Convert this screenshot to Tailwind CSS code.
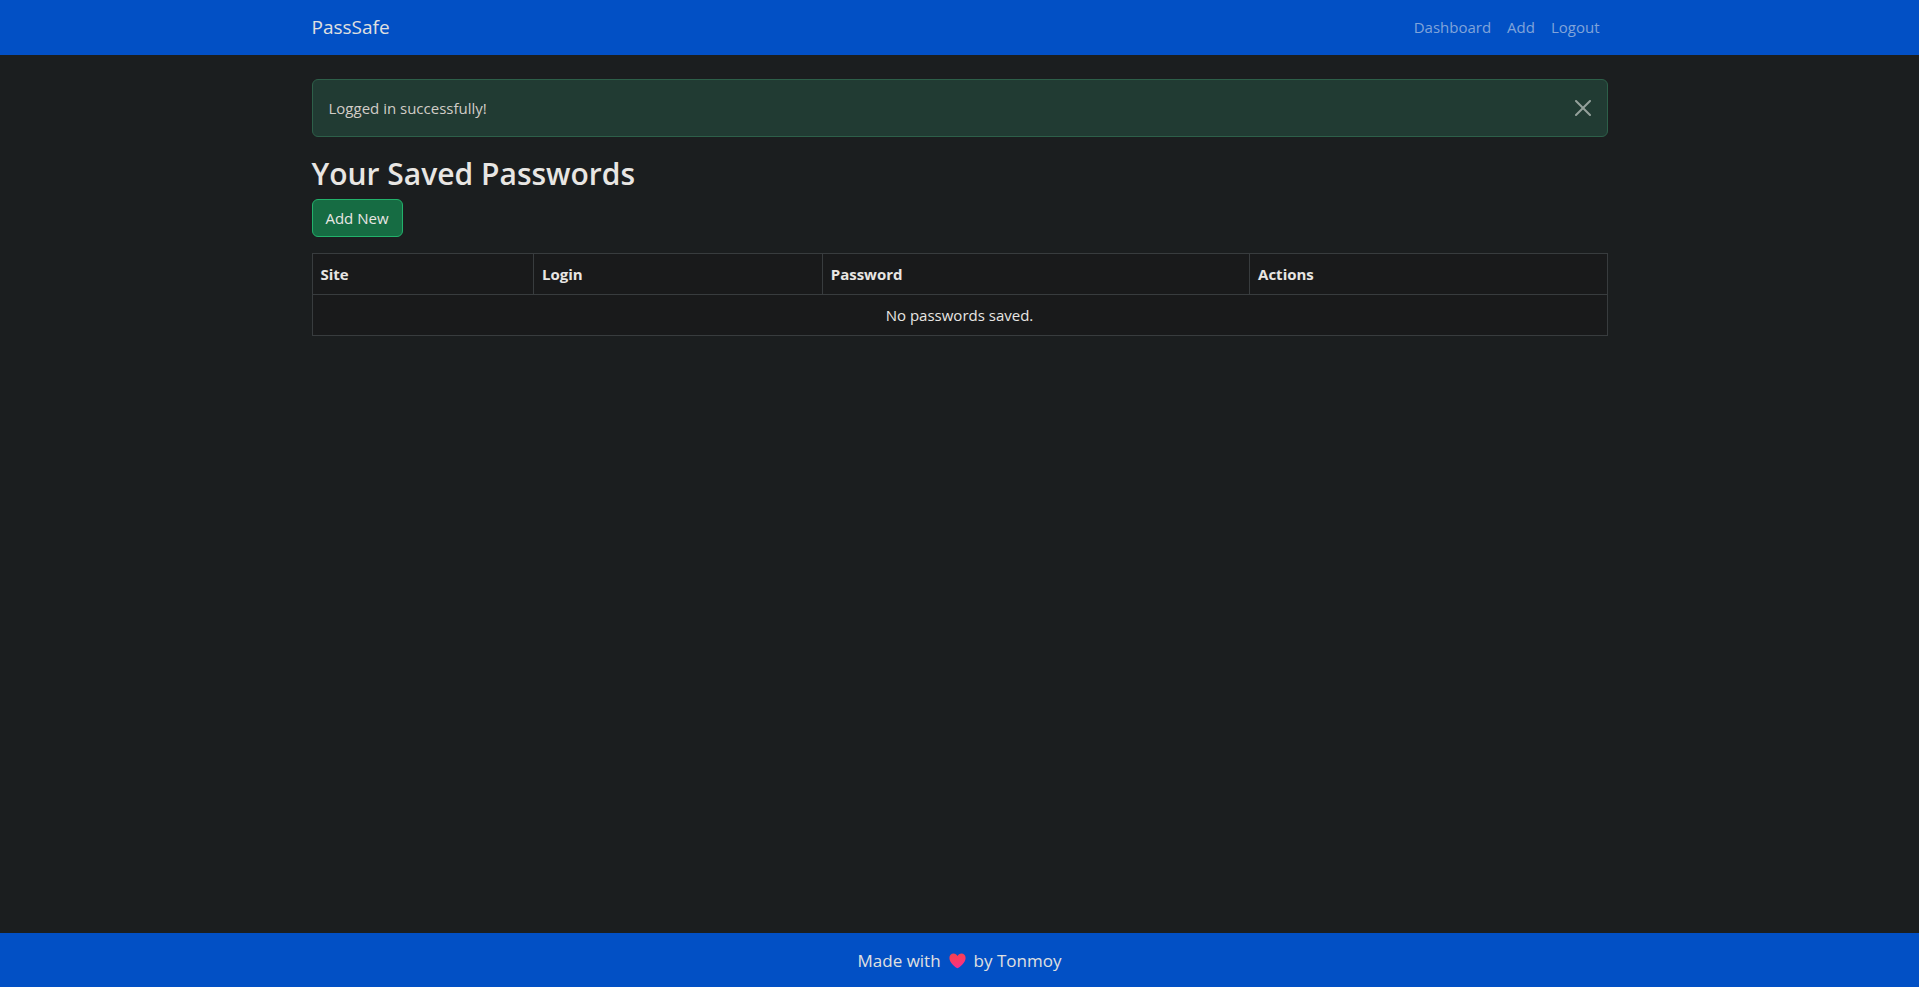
<!DOCTYPE html>
<html lang="en">
<head>
<meta charset="utf-8">
<meta name="viewport" content="width=device-width, initial-scale=1">
<title>PassSafe</title>
<script src="https://cdn.jsdelivr.net/npm/@tailwindcss/browser@4"></script>
</head>
<body class="flex min-h-screen flex-col bg-[#1b1e1f] font-['Open_Sans','Noto_Sans',sans-serif] text-[15px] leading-6 text-[#e8e6e3]">
  <nav class="bg-[#0250c5]">
    <div class="mx-auto flex h-[55px] w-full max-w-[1320px] items-center justify-between px-3 pb-0.5">
      <a href="#" class="text-[19px] text-[#e0e0e0]">PassSafe</a>
      <div class="flex gap-4 px-2 text-[#80a4da]">
        <a href="#">Dashboard</a>
        <a href="#">Add</a>
        <a href="#">Logout</a>
      </div>
    </div>
  </nav>

  <main class="mx-auto w-full max-w-[1320px] grow px-3 pt-6">
    <div role="alert" class="mb-4 flex items-center justify-between rounded-md border border-[#2d5f49] bg-[#213b33] p-4 text-[#d1cdc7]">
      <span>Logged in successfully!</span>
      <button type="button" aria-label="Close" class="text-[#94a09b]">
        <svg class="size-4" viewBox="0 0 16 16" fill="currentColor" aria-hidden="true"><path d="M.293.293a1 1 0 0 1 1.414 0L8 6.586 14.293.293a1 1 0 1 1 1.414 1.414L9.414 8l6.293 6.293a1 1 0 0 1-1.414 1.414L8 9.414l-6.293 6.293a1 1 0 0 1-1.414-1.414L6.586 8 .293 1.707a1 1 0 0 1 0-1.414z"/></svg>
      </button>
    </div>

    <h2 class="mb-1.5 pt-0.5 text-[30px] leading-[38px] font-semibold">Your Saved Passwords</h2>
    <a href="#" class="mb-4 flex w-fit min-w-[91px] justify-center rounded-md border border-[#22b16b] bg-[#166c43] px-3 py-1.5">Add New</a>

    <table class="w-full table-fixed border-collapse border border-[#383c3e] bg-[#191a1b]">
      <colgroup><col class="w-[17.1%]"><col class="w-[22.3%]"><col class="w-[33%]"><col></colgroup>
      <thead>
        <tr class="text-left">
          <th class="border border-[#383c3e] p-2 font-bold">Site</th>
          <th class="border border-[#383c3e] p-2 font-bold">Login</th>
          <th class="border border-[#383c3e] p-2 font-bold">Password</th>
          <th class="border border-[#383c3e] p-2 font-bold">Actions</th>
        </tr>
      </thead>
      <tbody>
        <tr><td colspan="4" class="border border-[#383c3e] p-2 text-center">No passwords saved.</td></tr>
      </tbody>
    </table>
  </main>

  <footer class="flex h-[54px] items-center justify-center gap-2 bg-[#0250c5] pt-0.5 text-[17px] text-[#e0e0e0]">
    <span>Made with</span>
    <svg class="h-4 w-[17px]" viewBox="0 0 17 16" role="img" aria-label="love">
      <defs><linearGradient id="heart" x1="0" y1="0" x2="0.3" y2="1"><stop offset="0" stop-color="#ef4350"/><stop offset=".5" stop-color="#fb3b62"/><stop offset="1" stop-color="#f52f8c"/></linearGradient></defs>
      <path fill="url(#heart)" d="M8.500 15.300C6.200 14 .4 9.700.4 4.900.4 2.300 2.300.5 4.600.5c1.700 0 3.100 1 3.900 2.500C9.300 1.500 10.700.5 12.400.5c2.300 0 4.200 1.800 4.200 4.400 0 4.800-5.800 9.100-8.100 10.400z"/>
    </svg>
    <span>by Tonmoy</span>
  </footer>
</body>
</html>
